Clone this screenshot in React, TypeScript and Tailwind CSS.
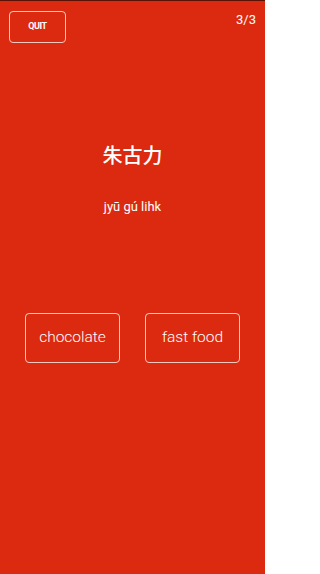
import React from "react";

export default function App() {
  return (
    <div
      className="w-[265px] h-[574px] bg-[#dc2a10] border-t border-[#5a1206] text-white overflow-hidden"
      style={{ fontFamily: "Roboto, 'Noto Sans CJK TC', sans-serif" }}
    >
      <div className="flex justify-between items-start pt-[10px] pl-[9px] pr-[9px]">
        <button className="w-[57px] h-[32px] border border-[#f6c9bf] rounded-[4px] flex items-center justify-center text-[9px] font-bold tracking-tighter text-white">
          QUIT
        </button>
        <span className="text-[13px] leading-[15px] mt-[1px]">3/3</span>
      </div>
      <div className="mt-[98px] text-center text-[20px] leading-[28px] font-medium" style={{ fontFamily: "'Noto Sans CJK TC', sans-serif" }}>
        朱古力
      </div>
      <div className="mt-[30px] text-center text-[13px] leading-[16px]">jyū gú lihk</div>
      <div className="mt-[98px] flex justify-center gap-[25px]">
        <button className="w-[95px] h-[50px] border border-[#f6c9bf] rounded-[4px] text-[15.5px] font-light text-white">
          chocolate
        </button>
        <button className="w-[95px] h-[50px] border border-[#f6c9bf] rounded-[4px] text-[15.5px] font-light text-white">
          fast food
        </button>
      </div>
    </div>
  );
}
